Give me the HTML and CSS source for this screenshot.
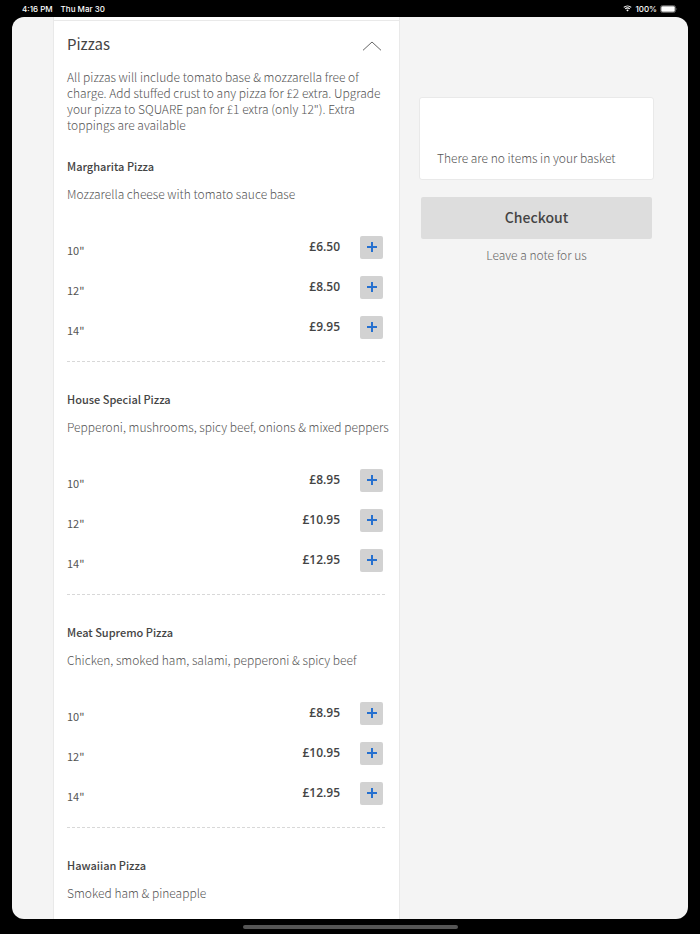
FILE: index.html
```html
<!DOCTYPE html>
<html lang="en">
<head>
<meta charset="utf-8">
<meta name="viewport" content="width=device-width, initial-scale=1">
<title>Pizzas</title>
<link rel="stylesheet" href="styles.css">
</head>
<body>
<header class="status">
  <span>4:16 PM</span>
  <span>Thu Mar 30</span>
  <span class="status-right">
    <svg class="wifi" viewBox="0 0 20 16" aria-hidden="true"><path d="M1.5 5.5a12.5 12.5 0 0 1 17 0M4.8 9a7.7 7.7 0 0 1 10.4 0" fill="none" stroke="#fff" stroke-width="2.4"/><path d="M7 11.6a4.6 4.6 0 0 1 6 0L10 15z" fill="#fff"/></svg>
    <span>100%</span>
    <svg class="battery" viewBox="0 0 36 16" aria-hidden="true"><rect x="1" y="1" width="30" height="14" rx="4" fill="none" stroke="#777" stroke-width="1.5"/><rect x="2.5" y="2.5" width="27" height="11" rx="2.5" fill="#fff"/><path d="M33 5.5q2.5 2.5 0 5z" fill="#777"/></svg>
  </span>
</header>
<main class="screen">
  <section class="menu">
    <div class="menu-head">
      <h1>Pizzas</h1>
      <button class="collapse" type="button" aria-label="Collapse Pizzas"><svg viewBox="0 0 20 10" aria-hidden="true"><path d="M1 9.3L10 1L19 9.3" fill="none" stroke="#666" stroke-width="1"/></svg></button>
    </div>
    <p class="intro">All pizzas will include tomato base &amp; mozzarella free of<br>charge. Add stuffed crust to any pizza for £2 extra. Upgrade your pizza to SQUARE pan for £1 extra (only 12"). Extra<br>toppings are available</p>
    <article class="item">
      <h2>Margharita Pizza</h2>
      <p>Mozzarella cheese with tomato sauce base</p>
      <ul>
        <li><span class="size">10"</span><span class="price">£6.50</span><button class="add" type="button" aria-label="Add 10 inch"><svg viewBox="0 0 12 12" aria-hidden="true"><path d="M6 1v10M1 6h10"/></svg></button></li>
        <li><span class="size">12"</span><span class="price">£8.50</span><button class="add" type="button" aria-label="Add 12 inch"><svg viewBox="0 0 12 12" aria-hidden="true"><path d="M6 1v10M1 6h10"/></svg></button></li>
        <li><span class="size">14"</span><span class="price">£9.95</span><button class="add" type="button" aria-label="Add 14 inch"><svg viewBox="0 0 12 12" aria-hidden="true"><path d="M6 1v10M1 6h10"/></svg></button></li>
      </ul>
    </article>
    <article class="item">
      <h2>House Special Pizza</h2>
      <p>Pepperoni, mushrooms, spicy beef, onions &amp; mixed peppers</p>
      <ul>
        <li><span class="size">10"</span><span class="price">£8.95</span><button class="add" type="button" aria-label="Add 10 inch"><svg viewBox="0 0 12 12" aria-hidden="true"><path d="M6 1v10M1 6h10"/></svg></button></li>
        <li><span class="size">12"</span><span class="price">£10.95</span><button class="add" type="button" aria-label="Add 12 inch"><svg viewBox="0 0 12 12" aria-hidden="true"><path d="M6 1v10M1 6h10"/></svg></button></li>
        <li><span class="size">14"</span><span class="price">£12.95</span><button class="add" type="button" aria-label="Add 14 inch"><svg viewBox="0 0 12 12" aria-hidden="true"><path d="M6 1v10M1 6h10"/></svg></button></li>
      </ul>
    </article>
    <article class="item">
      <h2>Meat Supremo Pizza</h2>
      <p>Chicken, smoked ham, salami, pepperoni &amp; spicy beef</p>
      <ul>
        <li><span class="size">10"</span><span class="price">£8.95</span><button class="add" type="button" aria-label="Add 10 inch"><svg viewBox="0 0 12 12" aria-hidden="true"><path d="M6 1v10M1 6h10"/></svg></button></li>
        <li><span class="size">12"</span><span class="price">£10.95</span><button class="add" type="button" aria-label="Add 12 inch"><svg viewBox="0 0 12 12" aria-hidden="true"><path d="M6 1v10M1 6h10"/></svg></button></li>
        <li><span class="size">14"</span><span class="price">£12.95</span><button class="add" type="button" aria-label="Add 14 inch"><svg viewBox="0 0 12 12" aria-hidden="true"><path d="M6 1v10M1 6h10"/></svg></button></li>
      </ul>
    </article>
    <article class="item">
      <h2>Hawaiian Pizza</h2>
      <p>Smoked ham &amp; pineapple</p>
    </article>
  </section>
  <aside class="basket">
    <div class="basket-card">There are no items in your basket</div>
    <button class="checkout" type="button">Checkout</button>
    <a class="note" href="#note">Leave a note for us</a>
  </aside>
</main>
<footer class="home"><span class="home-bar"></span></footer>
</body>
</html>
```
FILE: styles.css
```css
* { box-sizing: border-box; }
h1, h2, p, ul { margin: 0; padding: 0; }

body {
  margin: 0;
  height: 100vh;
  display: flex;
  flex-direction: column;
  overflow: hidden;
  background: #000;
  color: #555;
  font: 300 12px/20px "Noto Sans CJK JP", "Noto Sans", sans-serif;
}

button { border: 0; padding: 0; font-family: inherit; }

.status {
  display: flex;
  align-items: center;
  gap: 8px;
  flex: none;
  height: 17px;
  padding: 0 22px;
  color: #fff;
  font: 500 8px/16px Inter, sans-serif;
}
.status-right {
  display: flex;
  align-items: center;
  gap: 3px;
  margin-left: auto;
}
.wifi { width: 9px; height: 7px; }
.battery { width: 18px; height: 8px; }

.screen {
  flex: 1;
  min-height: 0;
  display: grid;
  grid-template-columns: minmax(0, 347fr) minmax(0, 235fr);
  gap: 19px;
  margin: 0 12px;
  padding: 0 34px 0 41px;
  overflow: hidden;
  border-radius: 12px;
  background: #f4f4f4;
}

.menu {
  padding: 0 14px 0 13px;
  border: 1px solid #e9e9e9;
  border-top: 0;
  border-bottom: 0;
  background: #fff;
}
.menu::before {
  content: "";
  display: block;
  height: 3px;
  margin: 0 -14px 0 -13px;
  border-bottom: 1px solid #e9e9e9;
}
.menu-head {
  display: flex;
  justify-content: space-between;
  align-items: center;
  height: 48px;
}
h1 {
  padding-bottom: 2px;
  color: #444;
  font-size: 15px;
  font-weight: 400;
  line-height: 24px;
}
.collapse {
  display: flex;
  margin: 2px 3px 0 0;
  background: none;
}
.collapse svg { width: 20px; height: 10px; }
.intro { line-height: 16px; }

.item { margin-top: 27px; }
.intro + .item { margin-top: 23px; }
.item p { white-space: nowrap; }
.item:not(:last-child) {
  padding-bottom: 14px;
  border-bottom: 1px dashed #d8d8d8;
}
h2 {
  margin-bottom: 8px;
  color: #444;
  font-size: 11px;
  font-weight: 500;
  line-height: 20px;
}
ul { margin-top: 23px; list-style: none; }
li {
  display: flex;
  align-items: center;
  height: 40px;
}
.size {
  padding-top: 6px;
  color: #555;
  font-size: 11px;
  font-weight: 400;
}
.price {
  margin-left: auto;
  color: #444;
  font: 600 12px/20px "Open Sans", sans-serif;
}
.add {
  display: grid;
  place-items: center;
  width: 23px;
  height: 23px;
  margin: 0 2px 0 20px;
  border-radius: 2px;
  background: #d2d2d2;
}
.add svg { width: 12px; height: 12px; }
.add path { stroke: #2670cf; stroke-width: 2; }

.basket {
  display: flex;
  flex-direction: column;
  padding-top: 80px;
}
.basket-card {
  padding: 50px 17px 11px;
  border: 1px solid #e9e9e9;
  border-radius: 3px;
  background: #fff;
}
.checkout {
  height: 42px;
  margin: 17px 2px 6px;
  padding-bottom: 2px;
  border-radius: 2px;
  background: #ddd;
  color: #444;
  font-size: 14px;
  font-weight: 500;
}
.note {
  align-self: center;
  color: #666;
  text-decoration: none;
}

.home {
  display: flex;
  justify-content: center;
  align-items: center;
  flex: none;
  height: 15px;
}
.home-bar {
  width: 215px;
  height: 4px;
  border-radius: 2px;
  background: #555;
}
```
